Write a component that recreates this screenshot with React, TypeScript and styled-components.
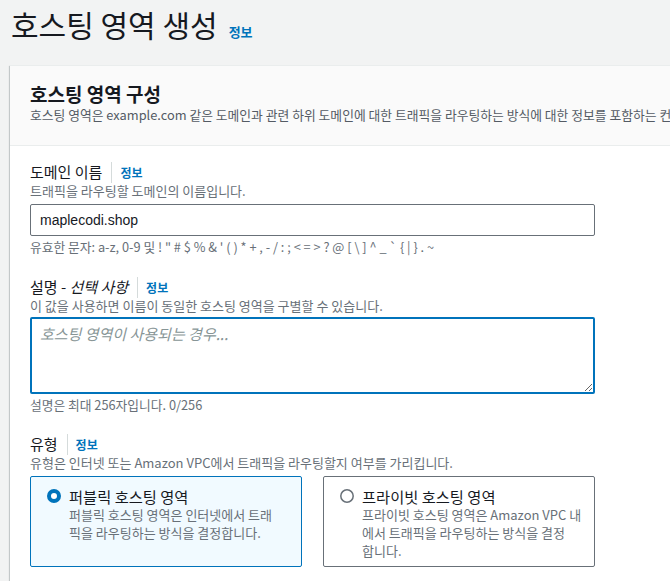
import React from "react";
import styled, { createGlobalStyle } from "styled-components";

const FONT = `"Noto Sans CJK KR", "Noto Sans", sans-serif`;
const INPUT_FONT = `"Liberation Sans", "Noto Sans CJK KR", sans-serif`;

const GlobalStyle = createGlobalStyle`
  html, body {
    margin: 0;
    padding: 0;
    background: #f2f3f3;
    font-family: ${FONT};
    color: #16191f;
  }
  * { box-sizing: border-box; }
`;

const Page = styled.div`
  height: 581px;
  overflow: hidden;
  padding: 6px 0 0 10px;
`;

const TitleRow = styled.div`
  display: flex;
  align-items: baseline;
  gap: 11px;
  padding-left: 1px;
  margin-bottom: 23px;
`;

const PageTitle = styled.h1`
  margin: 0;
  font-size: 30px;
  line-height: 36px;
  font-weight: 400;
  color: #16191f;
`;

const InfoLink = styled.a<{ $separated?: boolean }>`
  display: inline-block;
  font-size: ${(p) => (p.$separated ? "12px" : "13px")};
  font-weight: 700;
  color: #0073bb;
  text-decoration: none;
  line-height: ${(p) => (p.$separated ? "21px" : "16px")};
  ${(p) =>
    p.$separated
      ? `margin-left: 9px; padding-left: 8px; border-left: 1px solid #d5dbdb;`
      : ""}
`;

const Panel = styled.section`
  width: 900px;
  min-height: 600px;
  background: #ffffff;
  border-top: 1px solid #eaeded;
  box-shadow: 0 1px 1px 0 rgba(0, 28, 36, 0.3),
    1px 1px 1px 0 rgba(0, 28, 36, 0.15),
    -1px 1px 1px 0 rgba(0, 28, 36, 0.15);
`;

const PanelHeader = styled.header`
  background: #fafafa;
  border-bottom: 1px solid #eaeded;
  padding: 17px 20px 20px;
`;

const PanelTitle = styled.h2`
  margin: 0;
  font-size: 19px;
  line-height: 22px;
  font-weight: 700;
  color: #16191f;
`;

const PanelDescription = styled.p`
  margin: 0;
  font-size: 12.8px;
  line-height: 20px;
  color: #545b64;
  white-space: nowrap;
`;

const PanelBody = styled.div`
  padding: 15px 20px 20px;
  width: 605px;
`;

const Field = styled.div<{ $gap?: number }>`
  margin-top: ${(p) => p.$gap ?? 0}px;
`;

const LabelRow = styled.div`
  display: flex;
  align-items: baseline;
`;

const Label = styled.label`
  font-size: 15px;
  line-height: 22px;
  color: #16191f;
`;

const Optional = styled.i`
  font-style: italic;
`;

const FieldDescription = styled.div`
  font-size: 13px;
  line-height: 16px;
  color: #687078;
`;

const TextInput = styled.input`
  display: block;
  width: 565px;
  height: 32px;
  margin-top: 5px;
  padding: 0 9px;
  border: 1px solid #687078;
  border-radius: 2px;
  font-family: ${INPUT_FONT};
  font-size: 14px;
  color: #16191f;
  background: #ffffff;
  outline: none;
`;

const TextArea = styled.textarea`
  display: block;
  width: 565px;
  height: 77px;
  margin-top: 3px;
  padding: 5px 8px;
  border: 2px solid #0073bb;
  border-radius: 2px;
  font-family: ${FONT};
  font-size: 15px;
  line-height: 20px;
  color: #16191f;
  background: #ffffff;
  outline: none;
  &::placeholder {
    color: #879596;
    font-style: italic;
  }
`;

const Constraint = styled.div`
  margin-top: 2px;
  font-size: 12.75px;
  line-height: 18px;
  color: #687078;
`;

const Tiles = styled.div`
  display: grid;
  grid-template-columns: 272px 272px;
  column-gap: 21px;
  margin-top: 5px;
`;

const Tile = styled.label<{ $selected?: boolean }>`
  display: flex;
  align-items: flex-start;
  gap: 8px;
  padding: 9px 6px 6px 16px;
  border: 1px solid ${(p) => (p.$selected ? "#0073bb" : "#687078")};
  border-radius: 2px;
  background: ${(p) => (p.$selected ? "#f1faff" : "#ffffff")};
  cursor: pointer;
`;

const RadioIcon = styled.svg`
  flex: none;
  width: 14px;
  height: 14px;
  margin-top: 3px;
`;

const TileText = styled.div`
  flex: 1;
  min-width: 0;
`;

const TileTitle = styled.div`
  font-size: 15.3px;
  line-height: 20px;
  color: #16191f;
`;

const TileDescription = styled.div`
  font-size: 13px;
  line-height: 18px;
  color: #687078;
`;

function Radio({ checked }: { checked: boolean }) {
  return (
    <RadioIcon viewBox="0 0 14 14" aria-hidden="true">
      {checked ? (
        <circle cx="7" cy="7" r="5" fill="#ffffff" stroke="#0073bb" strokeWidth="4" />
      ) : (
        <circle cx="7" cy="7" r="6.2" fill="#ffffff" stroke="#687078" strokeWidth="1.5" />
      )}
    </RadioIcon>
  );
}

export default function App() {
  return (
    <>
      <GlobalStyle />
      <Page>
        <TitleRow>
          <PageTitle>호스팅 영역 생성</PageTitle>
          <InfoLink href="#">정보</InfoLink>
        </TitleRow>
        <Panel>
          <PanelHeader>
            <PanelTitle>호스팅 영역 구성</PanelTitle>
            <PanelDescription>
              호스팅 영역은 example.com 같은 도메인과 관련 하위 도메인에 대한 트래픽을 라우팅하는 방식에 대한 정보를 포함하는 컨테이너입니다.
            </PanelDescription>
          </PanelHeader>
          <PanelBody>
            <Field>
              <LabelRow>
                <Label htmlFor="domain">도메인 이름</Label>
                <InfoLink href="#" $separated>정보</InfoLink>
              </LabelRow>
              <FieldDescription>트래픽을 라우팅할 도메인의 이름입니다.</FieldDescription>
              <TextInput id="domain" defaultValue="maplecodi.shop" />
              <Constraint>
                유효한 문자: a-z, 0-9 및 ! " # $ % &amp; ' ( ) * + , - / : ; &lt; = &gt; ? @ [ \ ] ^ _ ` {"{"} | {"}"} . ~
              </Constraint>
            </Field>
            <Field $gap={20}>
              <LabelRow>
                <Label htmlFor="desc">
                  설명 - <Optional>선택 사항</Optional>
                </Label>
                <InfoLink href="#" $separated>정보</InfoLink>
              </LabelRow>
              <FieldDescription>이 값을 사용하면 이름이 동일한 호스팅 영역을 구별할 수 있습니다.</FieldDescription>
              <TextArea id="desc" placeholder="호스팅 영역이 사용되는 경우..." />
              <Constraint>설명은 최대 256자입니다. 0/256</Constraint>
            </Field>
            <Field $gap={19}>
              <LabelRow>
                <Label>유형</Label>
                <InfoLink href="#" $separated>정보</InfoLink>
              </LabelRow>
              <FieldDescription>유형은 인터넷 또는 Amazon VPC에서 트래픽을 라우팅할지 여부를 가리킵니다.</FieldDescription>
              <Tiles>
                <Tile $selected>
                  <Radio checked />
                  <TileText>
                    <TileTitle>퍼블릭 호스팅 영역</TileTitle>
                    <TileDescription>
                      퍼블릭 호스팅 영역은 인터넷에서 트래<br />픽을 라우팅하는 방식을 결정합니다.
                    </TileDescription>
                  </TileText>
                </Tile>
                <Tile>
                  <Radio checked={false} />
                  <TileText>
                    <TileTitle>프라이빗 호스팅 영역</TileTitle>
                    <TileDescription>
                      프라이빗 호스팅 영역은 Amazon VPC 내<br />에서 트래픽을 라우팅하는 방식을 결정<br />합니다.
                    </TileDescription>
                  </TileText>
                </Tile>
              </Tiles>
            </Field>
          </PanelBody>
        </Panel>
      </Page>
    </>
  );
}
